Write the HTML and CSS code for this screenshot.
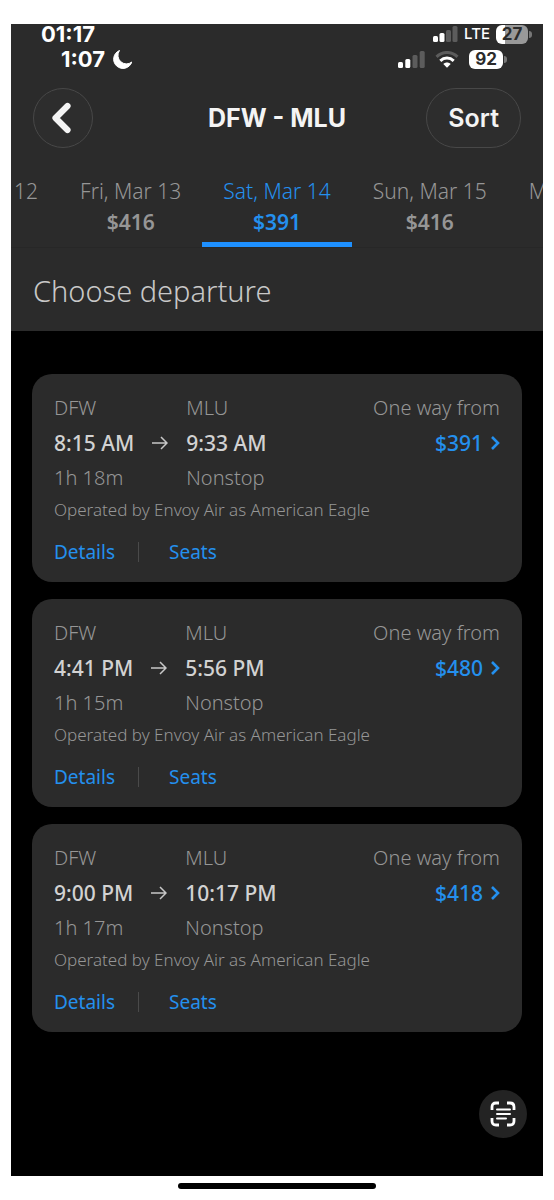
FILE: index.html
```
<!DOCTYPE html>
<html lang="en">
<head>
  <meta charset="UTF-8">
  <meta name="viewport" content="width=device-width, initial-scale=1">
  <title>DFW - MLU</title>
  <link rel="stylesheet" href="styles.css">
</head>
<body>

  <div class="screen">
    <header class="top">
      <div class="status status-outer">
        <span class="clock">01:17</span>
        <div class="status-icons">
          <svg width="25" height="16" viewBox="0 0 25 16">
            <rect x="0" y="10" width="5" height="6" rx="1.5" fill="#fff"/>
            <rect x="6.5" y="7" width="5" height="9" rx="1.5" fill="#fff"/>
            <rect x="13" y="4" width="5" height="12" rx="1.5" fill="#5c5c5c"/>
            <rect x="19.5" y="0" width="5" height="16" rx="1.5" fill="#5c5c5c"/>
          </svg>
          <span class="lte">LTE</span>
          <span class="battery battery-low">27</span>
        </div>
      </div>

      <div class="status status-inner">
        <span class="clock">1:07
          <svg width="19" height="19" viewBox="0 0 19 19">
            <path d="M6.5 0.5 A9.3 9.3 0 1 0 18.8 12 A8.5 8.5 0 0 1 6.5 0.5 Z" fill="#fff" stroke="#fff" stroke-width="1" stroke-linejoin="round"/>
          </svg>
        </span>
        <div class="status-icons">
          <svg width="27" height="17" viewBox="0 0 27 17">
            <rect x="0" y="11" width="5" height="6" rx="1.5" fill="#fff"/>
            <rect x="7.3" y="8" width="5" height="9" rx="1.5" fill="#fff"/>
            <rect x="14.5" y="4" width="5" height="13" rx="1.5" fill="#5c5c5c"/>
            <rect x="21.7" y="0" width="5" height="17" rx="1.5" fill="#5c5c5c"/>
          </svg>
          <svg class="wifi" width="24" height="17" viewBox="0 0 24 17" fill="none" stroke-width="3">
            <path d="M1.5 5.8 C7.5 0 16.5 0 22.5 5.8" stroke="#5c5c5c"/>
            <path d="M5.3 9.8 C9.2 6.2 14.8 6.2 18.7 9.8" stroke="#fff"/>
            <path d="M8.3 13 C10.4 11 13.6 11 15.7 13 L12 16.8 Z" fill="#fff"/>
          </svg>
          <span class="battery">92</span>
        </div>
      </div>

      <nav class="bar">
        <button class="back" aria-label="Back">
          <svg width="20" height="32" viewBox="0 0 20 32" fill="none" stroke="#f4f4f4" stroke-width="6.2" stroke-linecap="round" stroke-linejoin="round">
            <path d="M16.5 4 L4.5 16 L16.5 28"/>
          </svg>
        </button>
        <h1>DFW - MLU</h1>
        <button class="sort">Sort</button>
      </nav>

      <div class="dates">
        <div class="side before">
          <button class="date">Thu, Mar 12<b>$416</b></button>
          <button class="date">Fri, Mar 13<b>$416</b></button>
        </div>
        <button class="date active">Sat, Mar 14<b>$391</b></button>
        <div class="side after">
          <button class="date">Sun, Mar 15<b>$416</b></button>
          <button class="date">Mon, Mar 16<b>$416</b></button>
        </div>
      </div>

      <h2>Choose departure</h2>
    </header>

    <main class="flights">
      <article class="card">
        <div class="trip">
          <div class="leg"><span>DFW</span><strong>8:15 AM</strong><span>1h 18m</span></div>
          <svg class="arrow" width="16" height="14" viewBox="0 0 16 14"><path d="M0 7 H15 M9 1 L15 7 L9 13"/></svg>
          <div class="leg"><span>MLU</span><strong>9:33 AM</strong><span>Nonstop</span></div>
          <div class="fare">
            <span>One way from</span>
            <a href="#">$391 <svg width="9" height="14" viewBox="0 0 9 14"><path d="M1 1 L7 7 L1 13"/></svg></a>
          </div>
        </div>
        <p class="operator">Operated by Envoy Air as American Eagle</p>
        <div class="links"><a href="#">Details</a><a href="#">Seats</a></div>
      </article>

      <article class="card">
        <div class="trip">
          <div class="leg"><span>DFW</span><strong>4:41 PM</strong><span>1h 15m</span></div>
          <svg class="arrow" width="16" height="14" viewBox="0 0 16 14"><path d="M0 7 H15 M9 1 L15 7 L9 13"/></svg>
          <div class="leg"><span>MLU</span><strong>5:56 PM</strong><span>Nonstop</span></div>
          <div class="fare">
            <span>One way from</span>
            <a href="#">$480 <svg width="9" height="14" viewBox="0 0 9 14"><path d="M1 1 L7 7 L1 13"/></svg></a>
          </div>
        </div>
        <p class="operator">Operated by Envoy Air as American Eagle</p>
        <div class="links"><a href="#">Details</a><a href="#">Seats</a></div>
      </article>

      <article class="card">
        <div class="trip">
          <div class="leg"><span>DFW</span><strong>9:00 PM</strong><span>1h 17m</span></div>
          <svg class="arrow" width="16" height="14" viewBox="0 0 16 14"><path d="M0 7 H15 M9 1 L15 7 L9 13"/></svg>
          <div class="leg"><span>MLU</span><strong>10:17 PM</strong><span>Nonstop</span></div>
          <div class="fare">
            <span>One way from</span>
            <a href="#">$418 <svg width="9" height="14" viewBox="0 0 9 14"><path d="M1 1 L7 7 L1 13"/></svg></a>
          </div>
        </div>
        <p class="operator">Operated by Envoy Air as American Eagle</p>
        <div class="links"><a href="#">Details</a><a href="#">Seats</a></div>
      </article>
    </main>

    <button class="scan" aria-label="Scan text">
      <svg width="26" height="26" viewBox="0 0 26 26" fill="none" stroke="#fff" stroke-width="2.8">
        <path d="M2 9 V6 Q2 2 6 2 H9 M17 2 H20 Q24 2 24 6 V9 M24 17 V20 Q24 24 20 24 H17 M9 24 H6 Q2 24 2 20 V17"/>
        <path d="M7 8.5 H20 M7 13 H20 M7 17.5 H16" stroke-width="2" stroke-linecap="round"/>
      </svg>
    </button>
  </div>

  <div class="home"></div>

</body>
</html>
```

FILE: styles.css
```
* { box-sizing: border-box; }
body {
  display: flex;
  flex-direction: column;
  min-height: 100vh;
  margin: 0;
  padding: 24px 11px 0;
  background: #fff;
  color: #969696;
  font-family: "Noto Sans", "Open Sans", sans-serif;
  font-size: 20px;
  font-weight: 300;
  line-height: 28px;
}
button { padding: 0; border: 0; background: none; color: inherit; font: inherit; }
a { color: #2490ee; text-decoration: none; }
h1, h2, p { margin: 0; }
svg { flex: none; }

.screen { display: flex; flex-direction: column; flex: 1; background: #000; }
.top { background: #2b2b2b; }

/* status bars */
.status { display: flex; align-items: center; justify-content: space-between; font-family: Inter, sans-serif; color: #fff; }
.status-outer { height: 20px; padding: 0 15px 0 30px; }
.status-inner { height: 30px; padding: 0 40px 0 50px; }
.clock { display: flex; align-items: center; gap: 8px; font-size: 22px; font-weight: 700; line-height: 20px; }
.status-icons { display: flex; align-items: center; gap: 6px; }
.lte { font-size: 15px; font-weight: 500; line-height: 20px; }
.wifi { margin: 0 4px; }
.battery {
  position: relative;
  width: 34px;
  border-radius: 6px;
  background: #fff;
  color: #2b2b2b;
  font-size: 17px;
  font-weight: 700;
  line-height: 19px;
  text-align: center;
}
.battery::after { content: ""; position: absolute; right: -4px; top: 6px; width: 3px; height: 7px; border-radius: 0 3px 3px 0; background: #777; }
.battery-low { width: 32px; background: linear-gradient(90deg, #fff 9px, #999 9px); }

/* title bar */
.bar { display: grid; grid-template-columns: 1fr auto 1fr; align-items: center; padding: 14px 22px 0; font-family: Inter, sans-serif; color: #f4f4f4; }
.bar h1 { font-size: 25px; font-weight: 700; line-height: 28px; }
.back, .sort { height: 60px; border: 1px solid #484848; border-radius: 30px; background: #2d2d2d; }
.back { display: flex; align-items: center; justify-content: center; width: 60px; padding-right: 4px; }
.sort { justify-self: end; padding: 0 21px; font-size: 25px; font-weight: 600; }

/* date strip */
.dates { display: grid; grid-template-columns: minmax(0, 1fr) auto minmax(0, 1fr); margin-top: 26px; overflow: hidden; }
.side { display: flex; }
.before { justify-content: flex-end; }
.date { flex: none; padding: 3px 21px 6px; border-bottom: 5px solid transparent; font-size: 21px; line-height: 28px; white-space: nowrap; }
.date b { display: block; padding-top: 3px; font-weight: 600; }
.active { border-color: #1e90ff; color: #2490ee; }

.top h2 { padding: 23px 22px 21px; border-top: 1px solid #272727; color: #c8c8c8; font-size: 29px; font-weight: 300; line-height: 39px; }

/* flight cards */
.flights { display: flex; flex-direction: column; gap: 17px; padding: 43px 21px; }
.card { padding: 20px 22px 16px; border-radius: 20px; background: #2b2b2b; }
.trip { display: flex; gap: 18px; }
.leg, .fare { display: flex; flex-direction: column; gap: 7px; }
.leg strong { color: #d2d2d2; font-size: 21px; font-weight: 500; }
.arrow { margin-top: 42px; fill: none; stroke: #c8c8c8; stroke-width: 1.5; }
.fare { margin-left: auto; align-items: flex-end; }
.fare a { display: flex; align-items: center; gap: 8px; font-size: 21px; font-weight: 500; }
.fare path { fill: none; stroke: #2490ee; stroke-width: 2.6; }
.operator { padding-top: 6px; font-size: 17px; line-height: 24px; }
.links { display: flex; padding-top: 16px; font-size: 19px; font-weight: 400; }
.links a + a { position: relative; margin-left: 54px; }
.links a + a::before { content: ""; position: absolute; left: -31px; top: 4px; width: 1px; height: 20px; background: #4a4a4a; }

.scan { display: flex; align-items: center; justify-content: center; width: 48px; height: 48px; margin: auto 16px 38px auto; border-radius: 50%; background: #232323; }

.home { width: 198px; height: 6px; margin: 7px auto 11px; border-radius: 3px; background: #000; }
```
